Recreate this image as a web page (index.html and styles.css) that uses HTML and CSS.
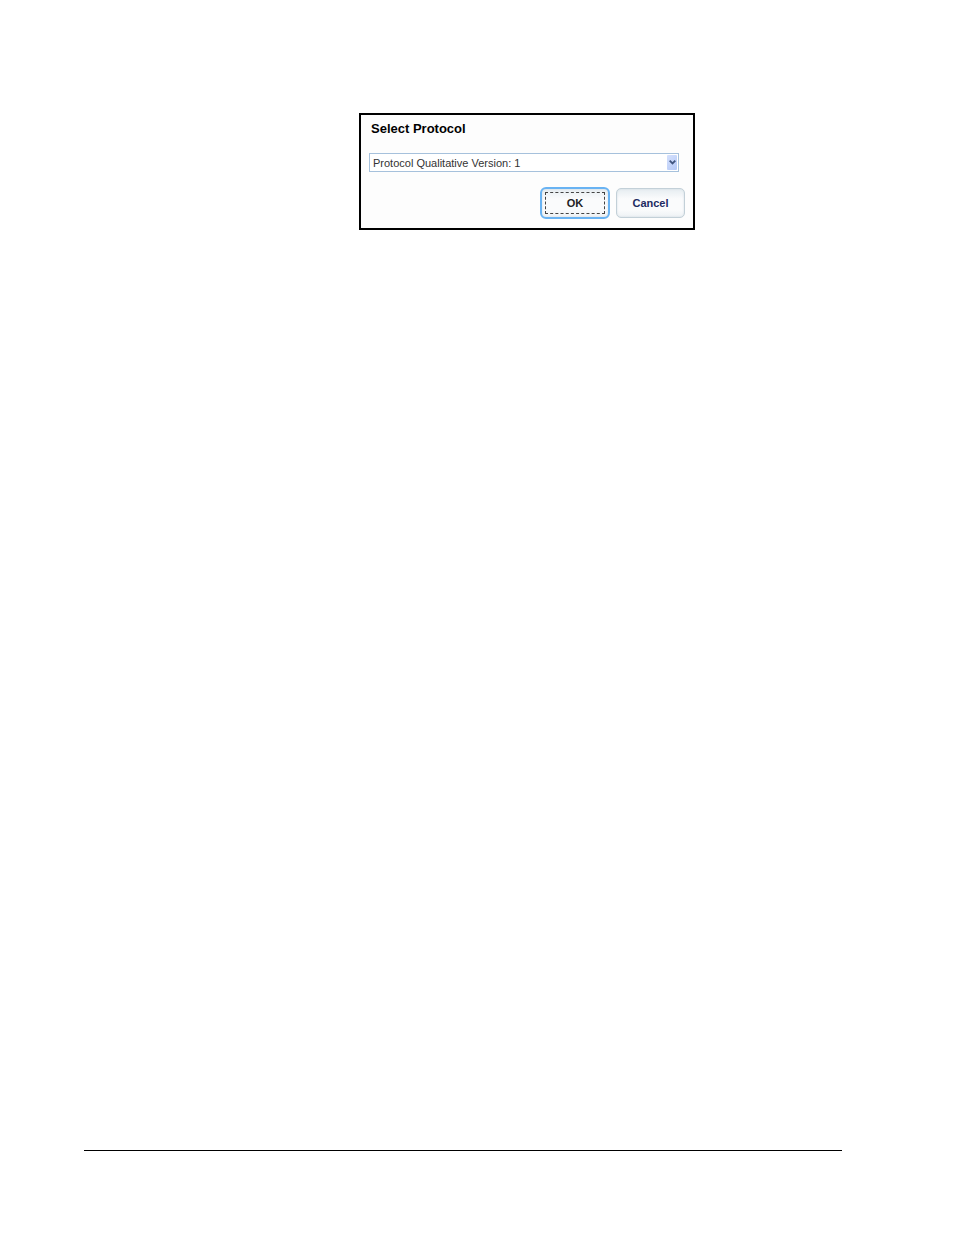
FILE: index.html
```html
<!DOCTYPE html>
<html lang="en">

<head>
    <meta charset="UTF-8">
    <meta name="viewport" content="width=device-width, initial-scale=1.0">
    <title>Select Protocol</title>
    <link rel="stylesheet" href="styles.css">
</head>

<body>
    <main class="page">
        <!-- Protocol dialog -->
        <form class="dialog">
            <label class="dialog-title" for="protocol">Select Protocol</label>
            <div class="select-container">
                <select id="protocol" name="protocol">
                    <option selected>Protocol Qualitative Version: 1</option>
                </select>
                <span class="select-arrow">
                    <svg width="7" height="5" viewBox="0 0 7 5" aria-hidden="true">
                        <path d="M0.7 0.7 L3.5 3.5 L6.3 0.7" fill="none" stroke="#40557f" stroke-width="1.8" />
                    </svg>
                </span>
            </div>
            <div class="dialog-buttons">
                <button class="btn btn-ok" type="button"><span>OK</span></button>
                <button class="btn btn-cancel" type="button">Cancel</button>
            </div>
        </form>
        <hr class="footer-line">
    </main>
</body>

</html>
```

FILE: styles.css
```css
* {
    box-sizing: border-box;
}

body {
    margin: 0;
    font-family: "Liberation Sans", Arial, sans-serif;
    background-color: #fff;
}

.page {
    display: flex;
    flex-direction: column;
    justify-content: space-between;
    min-height: 100vh;
    padding: 113px 112px 84px 84px;
}

.dialog {
    width: 100%;
    max-width: 336px;
    margin-left: 275px;
    padding: 5px 8px 9px 8px;
    border: 2px solid #000;
    background-color: #fdfdfd;
}

.dialog-title {
    display: block;
    margin-left: 2px;
    font-size: 13px;
    line-height: 17px;
    font-weight: bold;
    color: #000;
}

/* Drop-down */
.select-container {
    position: relative;
    margin: 16px 6px 15px 0;
}

.select-container select {
    appearance: none;
    display: block;
    width: 100%;
    height: 19px;
    margin: 0;
    padding: 0 16px 0 3px;
    border: 1px solid #a6c1dc;
    border-radius: 0;
    background-color: #fff;
    font-family: inherit;
    font-size: 11px;
    color: #333;
}

.select-arrow {
    position: absolute;
    top: 2px;
    right: 2px;
    bottom: 2px;
    width: 10px;
    display: flex;
    align-items: center;
    justify-content: center;
    border-radius: 1px;
    background: linear-gradient(135deg, #d5e1fd, #b4c8f6);
    pointer-events: none;
}

/* Buttons */
.dialog-buttons {
    display: flex;
    justify-content: flex-end;
    align-items: center;
    gap: 6px;
}

.btn {
    width: 69px;
    height: 30px;
    padding: 0;
    border: 1px solid #c3d0d8;
    border-radius: 5px;
    background: linear-gradient(#e6edf1, #fafbfc 35%, #fafbfc 75%, #eef2f5);
    box-shadow: inset 0 0 2px #cfdae1;
    font-family: inherit;
    font-size: 11px;
    font-weight: bold;
}

.btn-ok {
    width: 70px;
    height: 32px;
    padding: 3px;
    border: 2px solid #69b3f3;
    border-radius: 6px;
    color: #222;
}

.btn-ok span {
    display: flex;
    align-items: center;
    justify-content: center;
    height: 100%;
    border: 1px dashed #444;
}

.btn-cancel {
    color: #1d2b62;
}

.footer-line {
    width: 100%;
    height: 1px;
    margin: 0;
    border: none;
    background-color: #000;
}
```
